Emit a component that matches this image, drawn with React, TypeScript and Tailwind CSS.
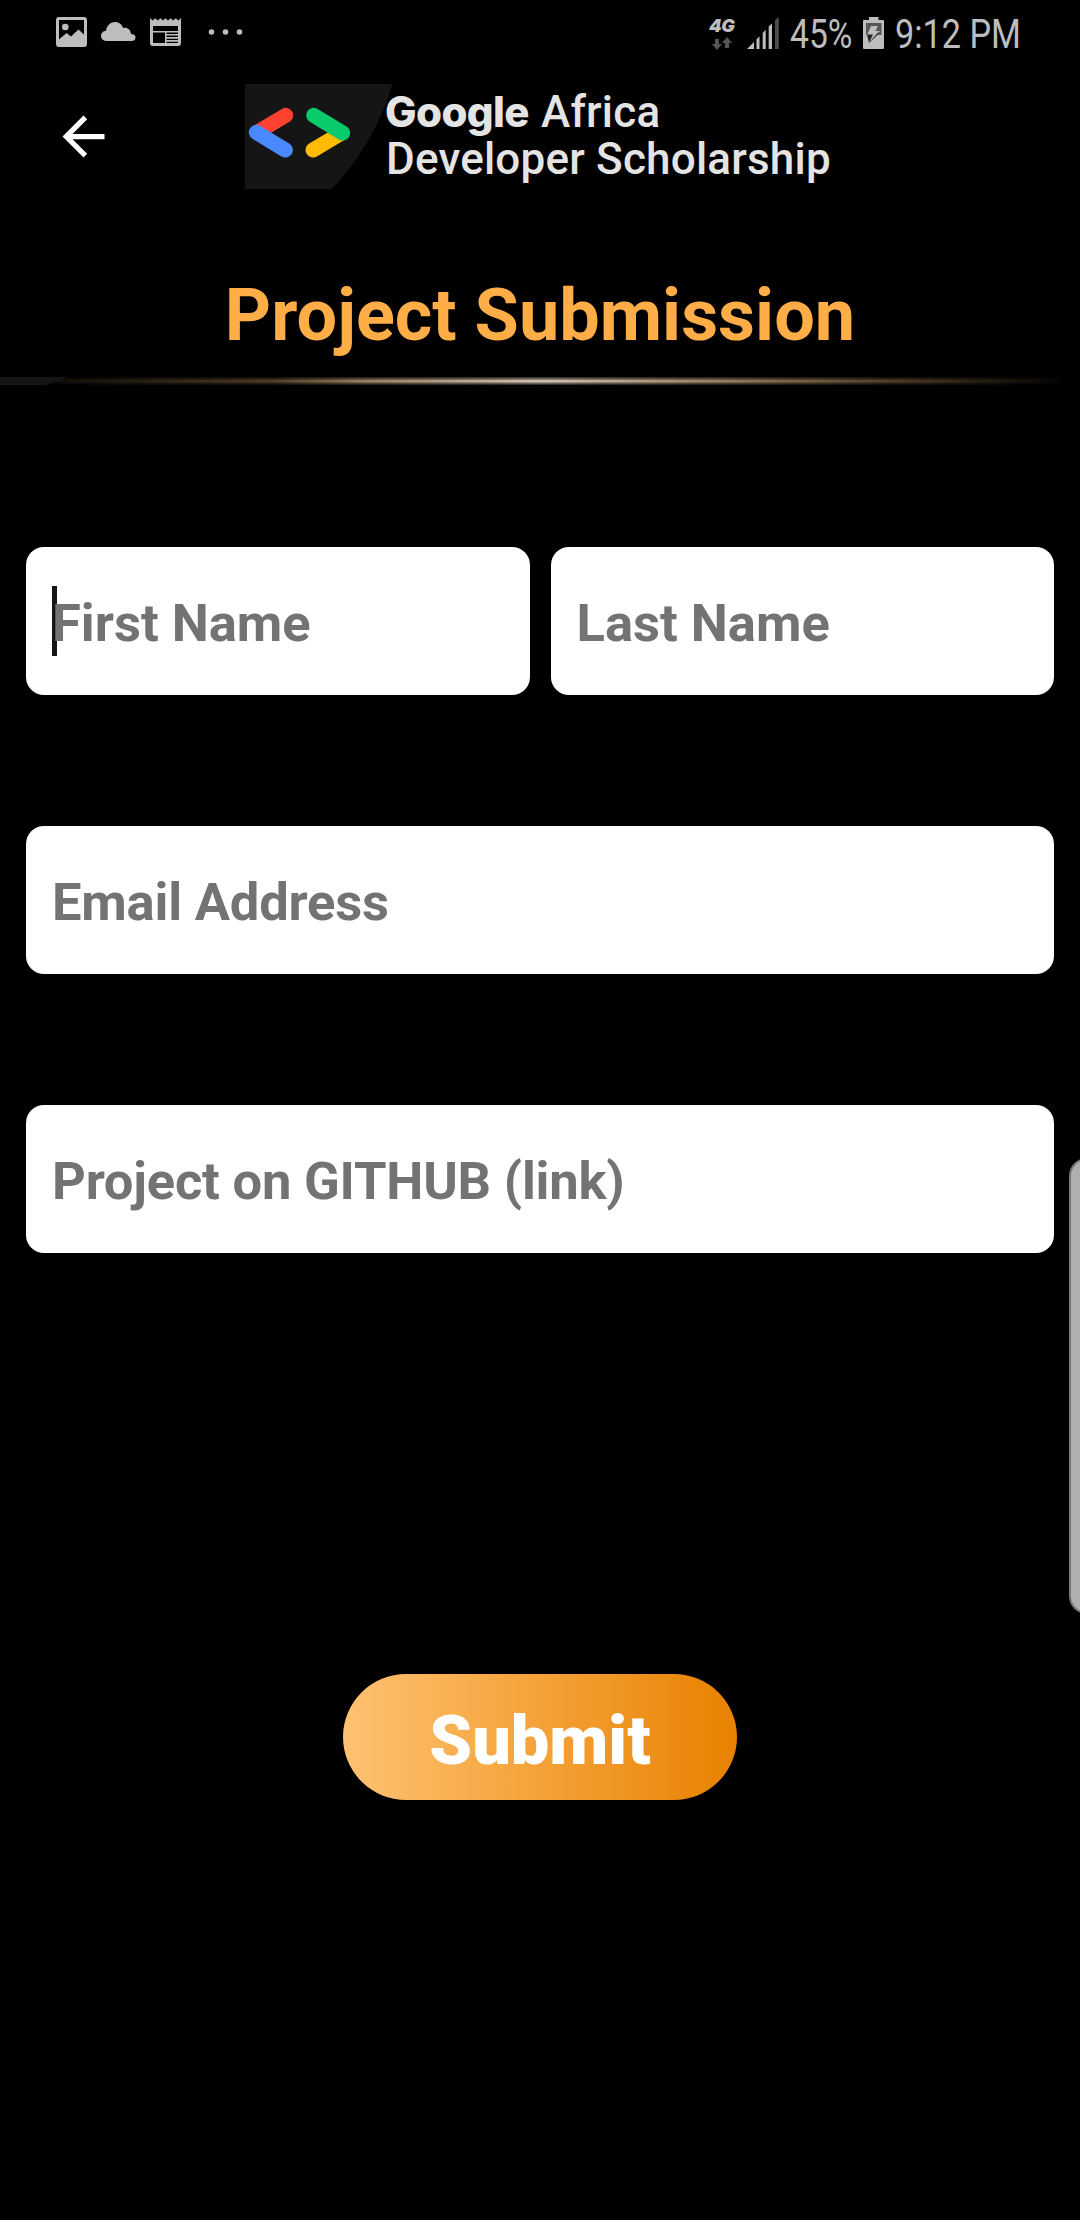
function StatusBar() {
  return (
    <div className="flex h-[66px] items-start justify-between pl-14 pr-[61px] pt-4 text-[#bdbdbd]">
      <div className="flex">
        <svg className="mt-px" width="31" height="30" viewBox="0 0 31 30">
          <path fill="currentColor" fillRule="evenodd" d="M3 0h25a3 3 0 0 1 3 3v24a3 3 0 0 1-3 3H3a3 3 0 0 1-3-3V3a3 3 0 0 1 3-3zM3 3v19.500l7.500-6.500 4.500 3.500 7.500-7 5.500 5V3z" />
          <circle cx="9.300" cy="10" r="3.300" fill="currentColor" />
        </svg>
        <svg className="ml-[14px] mt-[6px]" width="35" height="19" viewBox="0 0 35 19">
          <path fill="currentColor" d="M5 19a5 5 0 0 1-5-5c0-3 2-5 5-5C5.500 4 9 0 14 0c4 0 7 2.500 8 6 4-1 7.500 1 8 6 3 0 4.500 1.500 4.500 3.500S33 19 31 19z" />
        </svg>
        <svg className="ml-[14px] mt-[2px]" width="31" height="28" viewBox="0 0 31 28">
          <path fill="currentColor" fillRule="evenodd" d="M0 0l2.600 2.500L5.200 .3l2.600 2.200L10.400 .3 13 2.500 15.500 .3 18 2.500 20.600 .3l2.600 2.200L25.800 .3l2.600 2.200L31 0v25a3 3 0 0 1-3 3H3a3 3 0 0 1-3-3zM3 8v5h25V8zm0 6.500V25h12V14.500zm13.500 0V16H28v-1.500zm0 3V19H28v-1.500zm0 3.200V22H28v-1.300zm0 3V25H28v-1.300z" />
        </svg>
        <svg className="ml-[27px] mt-[13px]" width="36" height="6" viewBox="0 0 36 6" fill="currentColor">
          <circle cx="3.500" cy="3" r="2.800" />
          <circle cx="17.500" cy="3" r="2.800" />
          <circle cx="31.500" cy="3" r="2.800" />
        </svg>
      </div>

      <div className="flex">
        <div className="flex h-[34px] w-[25px] flex-col">
          <span className="-ml-px mt-px h-[17px] font-[Inter] text-[18px] font-black italic leading-[17px] tracking-[-0.5px]">4G</span>
          <svg className="ml-[2px] mt-[3px]" width="20" height="13" viewBox="0 0 20 13" fill="#555">
            <path d="M3 2h4v5h3l-5 6-5-6h3z" />
            <path d="M13 11h4V6h3l-5-6-5 6h3z" />
          </svg>
        </div>
        <svg className="ml-[12px] mt-px" width="33" height="32" viewBox="0 0 33 32" fill="currentColor">
          <path d="M0 32l7-7v7z" />
          <path d="M9.500 22.500l3-3.200V32h-3z" />
          <path d="M15.700 16l3-3.200V32h-3z" />
          <path d="M21.700 9.500l3.300-3V32h-3.300z" />
          <path d="M28 3.200L31.800 0v32H28z" fill="#4d4d4d" />
        </svg>
        <span className="ml-[10px] block w-[62px] whitespace-nowrap">
          <span className="inline-block origin-left scale-x-[0.84] text-[40px] leading-[37px]">45%</span>
        </span>
        <svg className="ml-[11px]" width="21" height="33" viewBox="0 0 21 33">
          <path fill="currentColor" d="M6 1h9.500v3H20a1 1 0 0 1 1 1v27a1 1 0 0 1-1 1H1a1 1 0 0 1-1-1V5a1 1 0 0 1 1-1h5z" />
          <path fill="#555" d="M3 7h15.500v12H3z" />
          <path fill="#bdbdbd" d="M8 10h7l-2.500 5H17l-3 4H4z" />
          <path fill="#222" d="M4 18.500h6L6 26.500l10-11L14.500 19 6 27z" />
        </svg>
        <span className="ml-[11px] block w-[124px] whitespace-nowrap">
          <span className="inline-block origin-left scale-x-[0.855] text-[40px] leading-[37px]">9:12 PM</span>
        </span>
      </div>
    </div>
  );
}

function Logo() {
  return (
    <div className="ml-[140px] flex h-[105px]">
      <svg width="147" height="105" viewBox="0 0 441 315">
        <path fill="#151515" d="M0 0h442C410 110 350 220 260 315H0z" />
        <g strokeWidth="45" strokeLinecap="round">
          <path stroke="#ff4131" d="M122 94L40 143" />
          <path stroke="#4889ff" d="M34 145L121 198" />
          <path stroke="#ffbc00" d="M204 198L288 148" />
          <path stroke="#0acb6b" d="M206 94L293 147" />
        </g>
      </svg>
      <div className="-ml-[7px] flex flex-col whitespace-nowrap pt-[5px] text-[44px] font-medium leading-[47px] text-[#e4e4e4]">
        <div className="flex">
          <span className="-mt-px w-[156px] font-[Inter] text-[42px] font-extrabold tracking-[-0.6px]">Google</span>
          <span className="tracking-[0.2px]">Africa</span>
        </div>
        <span className="pl-px tracking-[0.2px]">Developer Scholarship</span>
      </div>
    </div>
  );
}

function Field({ label, focused = false, tight = false }: { label: string; focused?: boolean; tight?: boolean }) {
  return (
    <div className="relative flex h-[148px] min-w-0 flex-1 items-center rounded-[18px] bg-white">
      {focused && <span className="absolute left-[26px] top-[39px] h-[70px] w-[5px] bg-[#1a1415]" />}
      <input
        aria-label={label}
        placeholder={label}
        className={`relative h-full w-full bg-transparent px-[26px] pt-[4px] text-[52.500px] font-bold text-[#333] outline-none placeholder:text-[#737373] ${tight ? "tracking-[-0.2px]" : "tracking-normal"}`}
      />
    </div>
  );
}

export default function App() {
  return (
    <div className="relative flex h-[2220px] w-[1080px] flex-col overflow-hidden bg-black font-[Roboto,sans-serif]">
      <StatusBar />

      <header className="flex pl-[52px] pt-[18px]">
        <button aria-label="Back" className="mt-[21px] h-[63px] w-[53px]">
          <svg width="63" height="63" viewBox="0 0 24 24" fill="#fff">
            <path d="M20 11H7.830l5.590-5.590L12 4l-8 8 8 8 1.410-1.410L7.830 13H20v-2z" />
          </svg>
        </button>
        <Logo />
      </header>

      <h1 className="mt-[84px] text-center text-[72px] font-bold leading-[86px] text-[#ffad46]">Project Submission</h1>

      <div className="mt-[18px] flex h-2 flex-col">
        <div className="relative h-2 bg-[linear-gradient(to_right,#000,#4d3c25_25%,#9b8263_34%,#d2c3b2_50%,#9b8263_66%,#4d3c25_83%,#000_99%)]">
          <div className="absolute inset-0 bg-[linear-gradient(to_bottom,rgba(0,0,0,.8),rgba(0,0,0,.4)_28%,transparent_45%,transparent_58%,rgba(0,0,0,.4)_75%,rgba(0,0,0,.85))]" />
          <div className="absolute inset-y-0 left-0 w-[68px] bg-[#151515] [clip-path:polygon(0_0,100%_0,68%_100%,0_100%)]" />
        </div>
      </div>

      <form className="mt-[162px] flex flex-col px-[26px]">
        <div className="flex gap-[21px]">
          <Field label="First Name" focused />
          <Field label="Last Name" />
        </div>
        <div className="mt-[131px] flex">
          <Field label="Email Address" tight />
        </div>
        <div className="mt-[131px] flex">
          <Field label="Project on GITHUB (link)" tight />
        </div>
        <button
          type="button"
          className="mt-[421px] h-[126px] w-[394px] self-center rounded-full bg-[linear-gradient(to_right,#ffc272,#f4a238_50%,#e88100)] pt-[8px] text-[68.500px] font-black text-white"
        >
          Submit
        </button>
      </form>

      <div className="absolute left-[1069px] top-[1158px] h-[456px] w-9 rounded-[18px] border-2 border-[#777] bg-[#b0b0b0]" />
    </div>
  );
}
